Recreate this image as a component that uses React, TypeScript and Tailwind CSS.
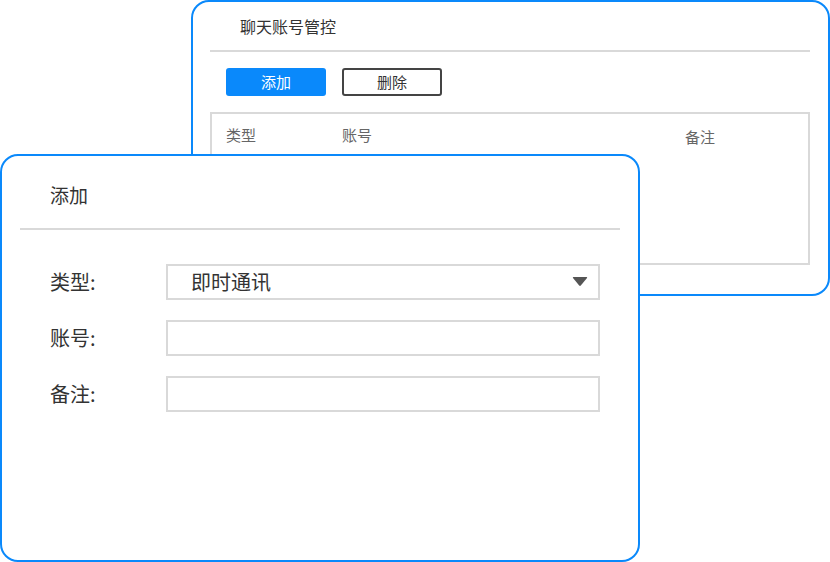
// 聊天账号管控 + 添加 弹窗

const fields = [
  { label: "类型", value: "即时通讯", select: true },
  { label: "账号", value: "" },
  { label: "备注", value: "" },
];

function BackWindow() {
  return (
    <div className="absolute left-[191px] top-0 flex h-[296px] w-[639px] flex-col rounded-[18px] border-2 border-[#0a89fb] bg-white pl-[17px] pr-[18px]">
      <div className="flex h-[48px] items-center pl-[30px] text-[16px] text-[#333]">聊天账号管控</div>
      <div className="h-[2px] bg-[#d9d9d9]" />
      <div className="mt-[16px] flex gap-[16px] pl-[16px]">
        <button className="flex h-[28px] w-[100px] items-center justify-center rounded-[3px] bg-[#0a89fb] text-[15px] text-white">
          添加
        </button>
        <button className="flex h-[28px] w-[100px] items-center justify-center rounded-[3px] border-2 border-[#444] text-[15px] text-[#333]">
          删除
        </button>
      </div>
      <div className="mt-[16px] h-[153px] border-2 border-[#d9d9d9]">
        <div className="flex pl-[14px] pt-[10px] text-[15px] text-[#666]">
          <div className="w-[116px]">类型</div>
          <div className="w-[343px]">账号</div>
          <div className="pt-[2px]">备注</div>
        </div>
      </div>
    </div>
  );
}

function FrontWindow() {
  return (
    <div className="absolute left-0 top-[154px] flex h-[408px] w-[640px] flex-col rounded-[18px] border-2 border-[#0a89fb] bg-white px-[18px]">
      <div className="flex h-[72px] items-center pl-[30px] pt-[6px] text-[19px] text-[#333]">添加</div>
      <div className="h-[2px] bg-[#d9d9d9]" />
      <div className="mt-[34px] flex flex-col gap-[20px] pl-[30px]">
        {fields.map((f) => (
          <div key={f.label} className="flex h-[36px] items-center">
            <div className="w-[116px] text-[20px] text-[#333]">{f.label}:</div>
            <div className="flex h-[36px] w-[434px] items-center justify-between border-2 border-[#d9d9d9] pl-[23px] pr-[10px] text-[20px] text-[#333]">
              <span>{f.value}</span>
              {f.select && (
                <svg width="16" height="11" viewBox="0 0 16 11" className="-mt-[2px]">
                  <path d="M1.5 1 H14.5 Q15.6 1 15 2 L8.8 9.6 Q8 10.5 7.2 9.6 L1 2 Q0.4 1 1.5 1 Z" fill="#555" />
                </svg>
              )}
            </div>
          </div>
        ))}
      </div>
    </div>
  );
}

export default function App() {
  return (
    <div className="relative h-[562px] w-[830px] overflow-hidden bg-white font-['Noto_Sans_CJK_SC',sans-serif]">
      <BackWindow />
      <FrontWindow />
    </div>
  );
}
